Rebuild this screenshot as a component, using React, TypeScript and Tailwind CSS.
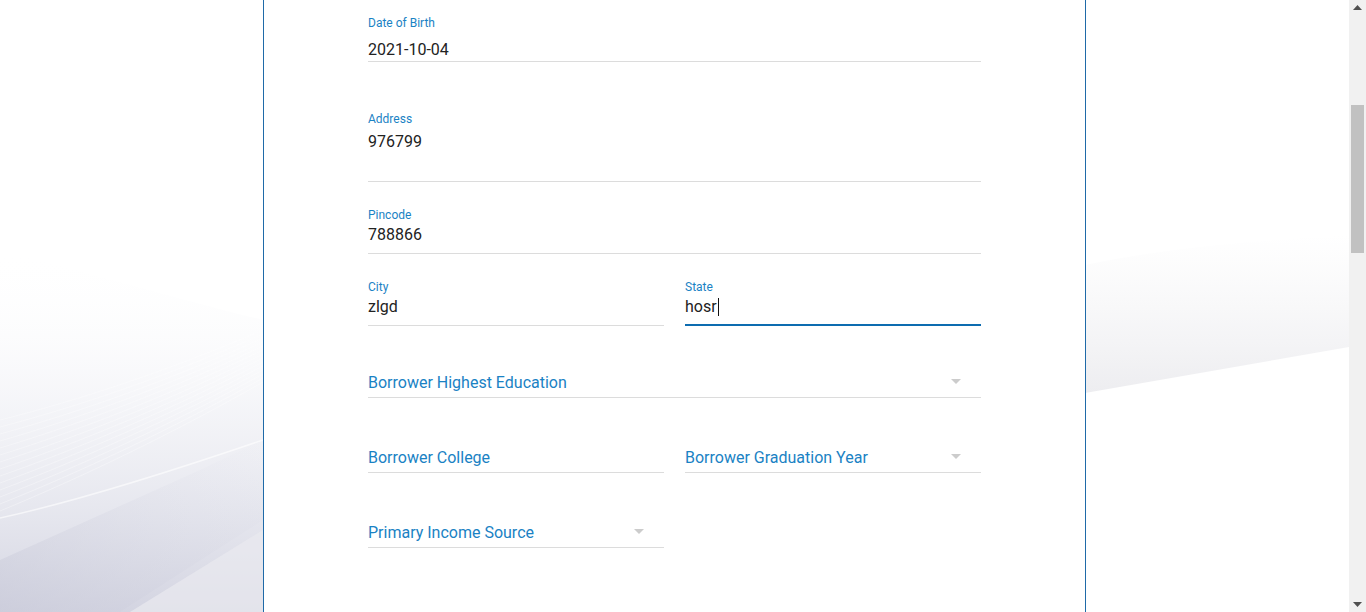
import React from "react";

const labelCls = "text-[12px] leading-[14px] text-[#1a82c4]";
const valueCls = "text-[16px] leading-[19px] text-[#222222]";

function Arrow() {
  return (
    <svg width="10" height="5" viewBox="0 0 10 5" className="absolute right-[20px] top-[6px]">
      <polygon points="0,0 10,0 5,5" fill="#cccccc" />
    </svg>
  );
}

function SelectField({ text, arrow = true, className = "" }: { text: string; arrow?: boolean; className?: string }) {
  return (
    <div className={"relative border-b border-[#dcdcdc] pb-[5px] " + className}>
      <div className="text-[16px] leading-[19px] text-[#1a82c4]">{text}</div>
      {arrow && <Arrow />}
    </div>
  );
}

function Background() {
  return (
    <svg className="absolute inset-0" width="1349" height="612" viewBox="0 0 1349 612" preserveAspectRatio="none">
      <defs>
        <linearGradient id="lg1" x1="0" y1="0" x2="0" y2="1">
          <stop offset="0" stopColor="#ffffff" stopOpacity="0" />
          <stop offset="0.45" stopColor="#ecedf3" stopOpacity="0.6" />
          <stop offset="1" stopColor="#d3d4e1" stopOpacity="1" />
        </linearGradient>
        <linearGradient id="rg1" x1="0" y1="0" x2="0" y2="1">
          <stop offset="0" stopColor="#f2f2f4" stopOpacity="0" />
          <stop offset="1" stopColor="#ededf0" stopOpacity="1" />
        </linearGradient>
        <linearGradient id="band" x1="0" y1="1" x2="1" y2="0">
          <stop offset="0" stopColor="#c9cad9" stopOpacity="0.9" />
          <stop offset="1" stopColor="#dfe0ea" stopOpacity="0" />
        </linearGradient>
      </defs>
      <rect width="1349" height="612" fill="#ffffff" />
      <path d="M0 250 C 80 270, 180 300, 263 320 L263 612 L0 612 Z" fill="url(#lg1)" />
      <path d="M0 612 L0 560 L200 470 L263 440 L263 520 L120 612 Z" fill="url(#band)" opacity="0.7" />
      <path d="M130 612 L263 530 L263 612 Z" fill="#e9e9f0" opacity="0.7" />
      <path d="M0 518 C 60 505, 140 482, 263 440" stroke="#ffffff" strokeWidth="1.5" fill="none" opacity="0.6" />
      {Array.from({ length: 14 }).map((_, i) => (
        <path
          key={i}
          d={`M0 ${420 + i * 7} C 80 ${400 + i * 6}, 170 ${370 + i * 5}, 263 ${330 + i * 4}`}
          stroke="#ffffff"
          strokeWidth="0.7"
          fill="none"
          opacity="0.45"
        />
      ))}
      <path d="M1085 265 C 1180 245, 1270 240, 1349 235 L1349 347 L1085 393 Z" fill="url(#rg1)" />
    </svg>
  );
}

function Scrollbar() {
  return (
    <div className="relative w-[17px] h-[612px] bg-[#f1f1f1] shrink-0">
      <svg width="9" height="5" viewBox="0 0 9 5" className="absolute left-[4px] top-[5px]">
        <polygon points="0,5 9,5 4.5,0" fill="#505050" />
      </svg>
      <div className="absolute left-[2px] top-[105px] w-[13px] h-[148px] bg-[#c1c1c1]" />
      <svg width="9" height="5" viewBox="0 0 9 5" className="absolute left-[4px] top-[602px]">
        <polygon points="0,0 9,0 4.5,5" fill="#505050" />
      </svg>
    </div>
  );
}

export default function App() {
  return (
    <div className="flex h-[612px] w-[1366px] overflow-hidden" style={{ fontFamily: "Roboto, 'Noto Sans', sans-serif" }}>
      <div className="relative flex-1 h-[612px]">
        <Background />
        <div className="relative mx-auto w-[823px] h-[612px] bg-white border-x border-[#1f6aa8] px-[104px] pt-[16px]">
          <div className="border-b border-[#dcdcdc] pb-[2px]">
            <div className={labelCls}>Date of Birth</div>
            <div className={valueCls + " pt-[10px]"}>2021-10-04</div>
          </div>
          <div className="mt-[50px] border-b border-[#dcdcdc] pb-[30px]">
            <div className={labelCls}>Address</div>
            <div className={valueCls + " pt-[6px]"}>976799</div>
          </div>
          <div className="mt-[26px] border-b border-[#dcdcdc] pb-[9px]">
            <div className={labelCls}>Pincode</div>
            <div className={valueCls + " pt-[3px]"}>788866</div>
          </div>
          <div className="mt-[26px] grid grid-cols-2 gap-x-[21px]">
            <div className="border-b border-[#dcdcdc] pb-[9px]">
              <div className={labelCls}>City</div>
              <div className={valueCls + " pt-[3px]"}>zlgd</div>
            </div>
            <div className="border-b-2 border-[#0d6cb0] pb-[8px]">
              <div className={labelCls}>State</div>
              <div className={valueCls + " pt-[3px] flex items-center"}>
                <span>hosr</span>
                <span className="inline-block w-px h-[18px] bg-[#111111] ml-[1px]" />
              </div>
            </div>
          </div>
          <SelectField text="Borrower Highest Education" className="mt-[47px]" />
          <div className="mt-[50px] grid grid-cols-2 gap-x-[21px]">
            <SelectField text="Borrower College" arrow={false} />
            <SelectField text="Borrower Graduation Year" />
          </div>
          <div className="mt-[50px] grid grid-cols-2 gap-x-[21px]">
            <SelectField text="Primary Income Source" />
          </div>
        </div>
      </div>
      <Scrollbar />
    </div>
  );
}
